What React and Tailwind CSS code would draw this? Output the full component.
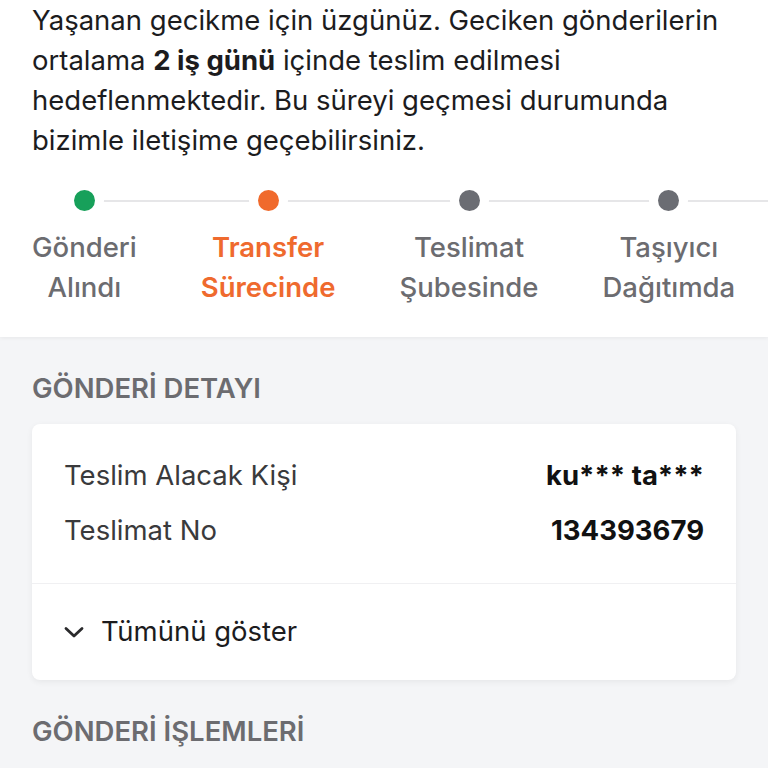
import React from "react";

const steps = [
  { l1: "Gönderi", l2: "Alındı", dot: "bg-[#17a05a]", text: "text-[#6c6c70]", weight: "font-medium" },
  { l1: "Transfer", l2: "Sürecinde", dot: "bg-[#f06a2c]", text: "text-[#ef6a2e]", weight: "font-semibold" },
  { l1: "Teslimat", l2: "Şubesinde", dot: "bg-[#6b6d73]", text: "text-[#6c6c70]", weight: "font-medium" },
  { l1: "Taşıyıcı", l2: "Dağıtımda", dot: "bg-[#6b6d73]", text: "text-[#6c6c70]", weight: "font-medium" },
];

export default function App() {
  return (
    <div className="w-[768px] h-[768px] overflow-hidden bg-[#f4f5f7] font-['Inter','Noto_Sans',sans-serif]">
      <div className="bg-white pb-[30px] shadow-[0_1px_4px_rgba(0,0,0,0.06)] relative z-10">
        <p className="px-8 text-[27.5px] leading-[40px] text-[#1c1c1e]">
          Yaşanan gecikme için üzgünüz. Geciken gönderilerin ortalama <b className="font-bold">2 iş günü</b> içinde teslim edilmesi hedeflenmektedir. Bu süreyi geçmesi durumunda bizimle iletişime geçebilirsiniz.
        </p>
        <div className="mt-[30px] overflow-hidden">
          <div className="flex gap-16 pl-8">
            {steps.map((s, i) => (
              <div key={i} className="relative flex flex-col items-center shrink-0">
                {i === 0 && (
                  <div className="absolute left-1/2 top-[10px] h-[2px] w-[900px] bg-[#e6e6e8]" />
                )}
                <div className={`relative z-10 h-[21px] w-[21px] rounded-full ${s.dot} shadow-[0_0_0_9px_#ffffff]`} />
                <div className={`mt-4 text-center text-[27.5px] leading-[40px] ${s.weight} ${s.text}`}>
                  <div>{s.l1}</div>
                  <div>{s.l2}</div>
                </div>
              </div>
            ))}
          </div>
        </div>
      </div>

      <div className="px-8 pt-[35px]">
        <h2 className="text-[27.5px] leading-[32px] font-semibold text-[#6c6c70]">GÖNDERİ DETAYI</h2>
        <div className="mt-5 rounded-lg bg-white shadow-[0_2px_6px_rgba(0,0,0,0.06)]">
          <div className="px-8 pt-6 pb-[25px]">
            <div className="flex h-[55px] items-center justify-between text-[27.5px]">
              <span className="text-[#3a3a3c]">Teslim Alacak Kişi</span>
              <span className="font-bold text-[#111111]">ku*** ta***</span>
            </div>
            <div className="flex h-[55px] items-center justify-between text-[27.5px]">
              <span className="text-[#3a3a3c]">Teslimat No</span>
              <span className="font-bold text-[#111111]">134393679</span>
            </div>
          </div>
          <div className="h-px bg-[#f0f0f2]" />
          <div className="flex h-[96px] items-center gap-[17px] px-8">
            <svg width="20" height="12" viewBox="0 0 20 12" fill="none">
              <path d="M2 2.5 L10 10 L18 2.5" stroke="#2a2a2c" strokeWidth="2.8" strokeLinecap="round" strokeLinejoin="round" />
            </svg>
            <span className="text-[27.5px] text-[#1c1c1e]">Tümünü göster</span>
          </div>
        </div>
        <h2 className="mt-[35px] text-[27.5px] leading-[32px] font-semibold text-[#6c6c70]">GÖNDERİ İŞLEMLERİ</h2>
      </div>
    </div>
  );
}
